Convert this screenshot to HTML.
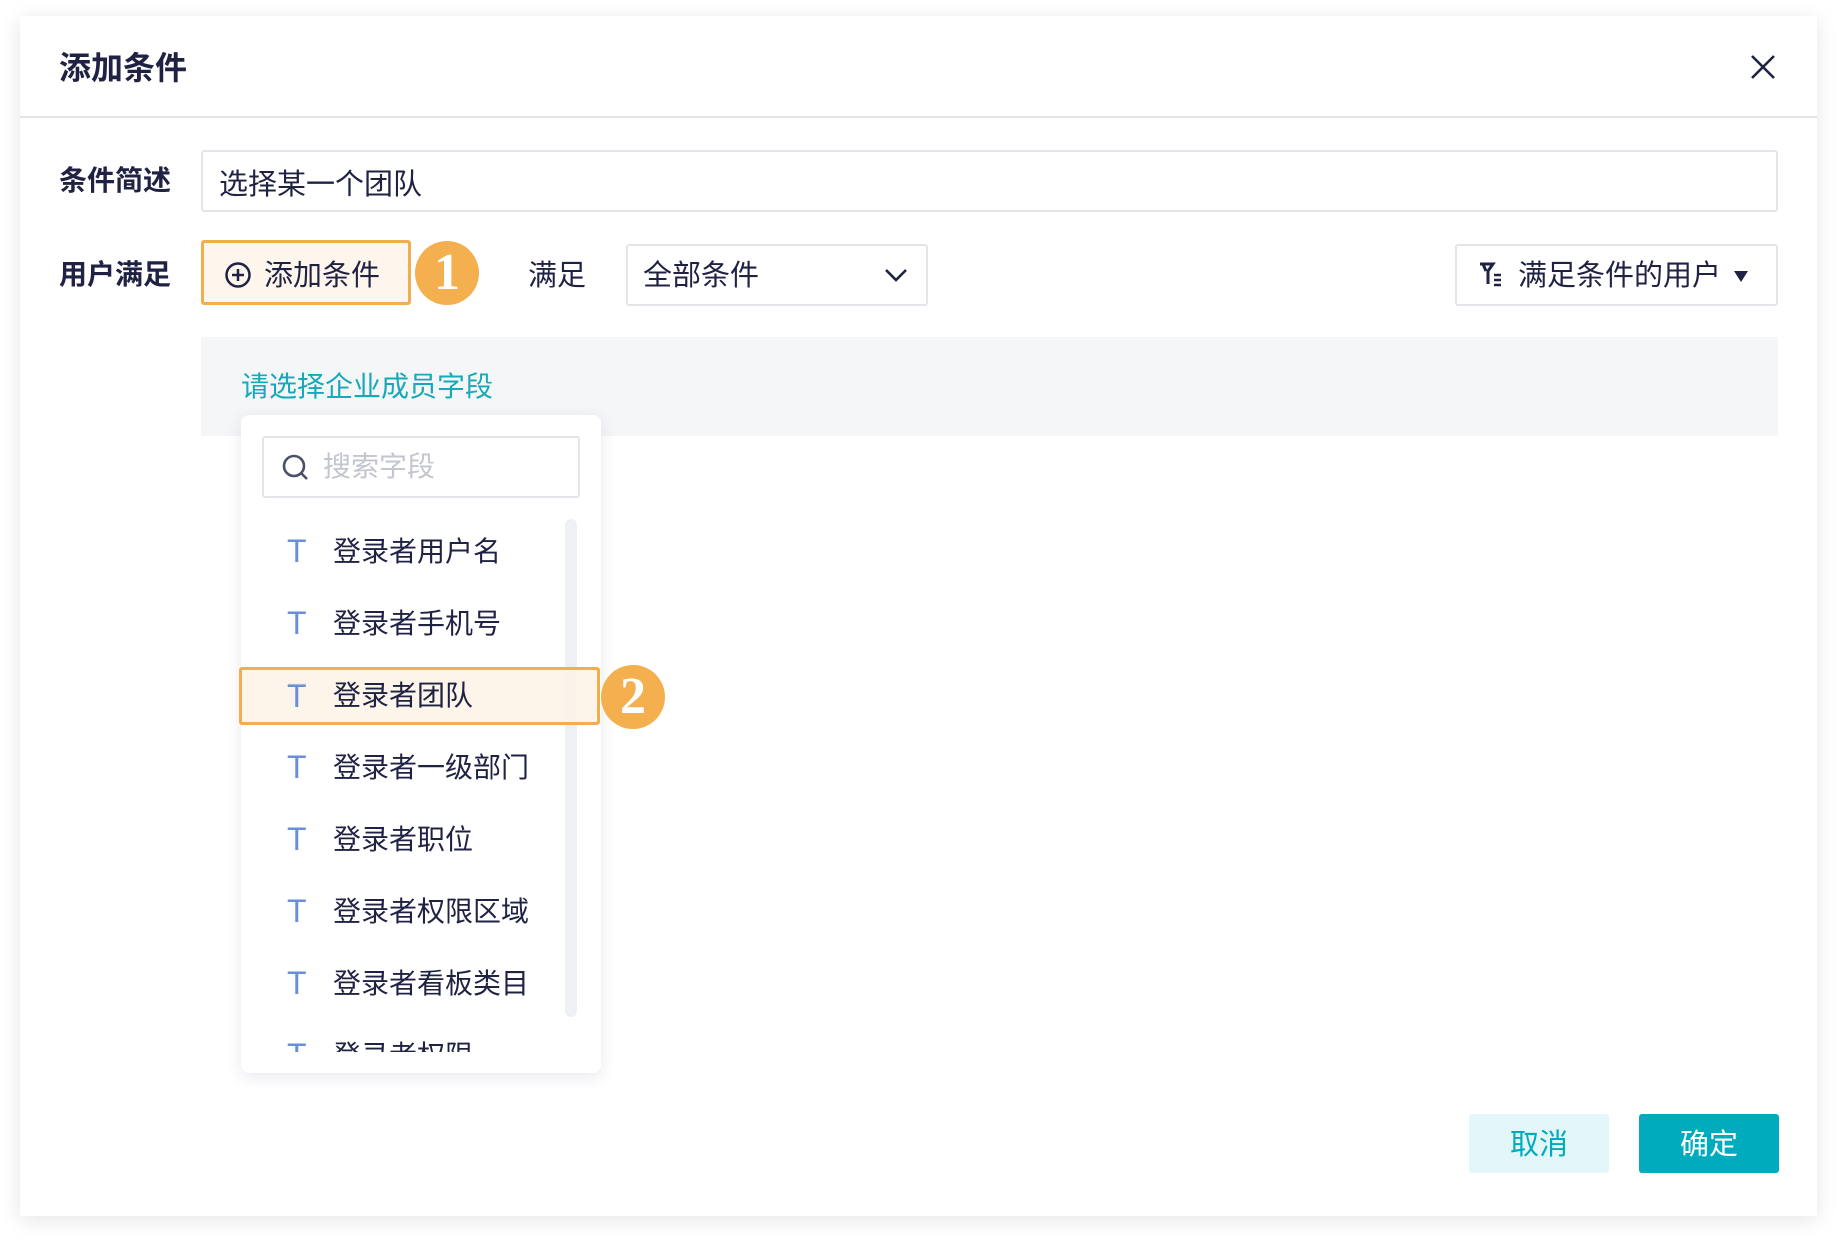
<!DOCTYPE html>
<html><head><meta charset="utf-8"><style>
*{box-sizing:border-box;margin:0;padding:0}
body{width:1837px;height:1240px;background:#fff;position:relative;overflow:hidden;font-family:"Liberation Sans","Noto Sans CJK SC",sans-serif;color:#1f2243}
.abs{position:absolute}
.dlg{left:20px;top:16px;width:1797px;height:1200px;background:#fff;box-shadow:0 4px 20px rgba(0,0,0,.10)}
.t{white-space:nowrap;line-height:1}
.item{position:absolute;left:0;width:360px;height:58px}
.item .T{position:absolute;left:46px;top:13px;font-size:32px;color:#6a8fd6;line-height:1}
.item .x{position:absolute;left:92px;top:16px;font-size:28px;line-height:1;white-space:nowrap}
</style></head><body>
<div class="abs dlg"></div>
<div class="abs t" style="left:59px;top:52px;font-size:32px;font-weight:bold">添加条件</div>
<svg class="abs" style="left:1749px;top:53px" width="28" height="28" viewBox="0 0 28 28"><path d="M3 3L25 25M25 3L3 25" stroke="#1f2243" stroke-width="2.6"/></svg>
<div class="abs" style="left:20px;top:116px;width:1797px;height:2px;background:#e4e5ea"></div>

<div class="abs t" style="left:59px;top:167px;font-size:28px;font-weight:bold">条件简述</div>
<div class="abs" style="left:201px;top:150px;width:1577px;height:62px;border:2px solid #e4e5ea;border-radius:3px"></div>
<div class="abs t" style="left:219px;top:171px;font-size:29px">选择某一个团队</div>

<div class="abs t" style="left:59px;top:261px;font-size:28px;font-weight:bold">用户满足</div>
<div class="abs" style="left:201px;top:240px;width:210px;height:65px;border:3px solid #f2ae4e;border-radius:3px;background:#fef6ec"></div>
<svg class="abs" style="left:224px;top:261px" width="28" height="28" viewBox="0 0 28 28"><circle cx="14" cy="14" r="11.5" fill="none" stroke="#1f2243" stroke-width="2.5"/><path d="M14 8v12M8 14h12" stroke="#1f2243" stroke-width="2.5"/></svg>
<div class="abs t" style="left:264px;top:262px;font-size:29px">添加条件</div>
<div class="abs" style="left:415px;top:241px;width:64px;height:64px;border-radius:50%;background:#f4b04f"></div>
<div class="abs t" style="left:415px;top:247px;width:64px;text-align:center;font-size:52px;font-weight:bold;color:#fff;font-family:'Liberation Serif',serif">1</div>

<div class="abs t" style="left:528px;top:262px;font-size:29px">满足</div>
<div class="abs" style="left:626px;top:244px;width:302px;height:62px;border:2px solid #e4e5ea;border-radius:3px"></div>
<div class="abs t" style="left:643px;top:262px;font-size:29px">全部条件</div>
<svg class="abs" style="left:884px;top:267px" width="24" height="16" viewBox="0 0 24 16"><path d="M2 3l10 10L22 3" fill="none" stroke="#1f2243" stroke-width="2.6"/></svg>

<div class="abs" style="left:1455px;top:244px;width:323px;height:62px;border:2px solid #e4e5ea;border-radius:3px"></div>
<svg class="abs" style="left:1478px;top:261px" width="28" height="28" viewBox="0 0 28 28"><path d="M2 3h13l-5 7v13" fill="none" stroke="#1f2243" stroke-width="3"/><path d="M5 3l3 7" stroke="#1f2243" stroke-width="3"/><path d="M16 14h7M16 19h7M16 24h7" stroke="#1f2243" stroke-width="2.4"/></svg>
<div class="abs t" style="left:1518px;top:262px;font-size:29px">满足条件的用户</div>
<svg class="abs" style="left:1733px;top:269px" width="16" height="14" viewBox="0 0 16 14"><path d="M1 2h14L8 13z" fill="#1f2243"/></svg>

<div class="abs" style="left:201px;top:337px;width:1577px;height:99px;background:#f5f6f8"></div>
<div class="abs t" style="left:241px;top:373px;font-size:28px;color:#16a9ba">请选择企业成员字段</div>

<div class="abs" style="left:241px;top:415px;width:360px;height:658px;background:#fff;border-radius:8px;box-shadow:0 4px 16px rgba(30,40,80,.10)"></div>
<div class="abs" style="left:262px;top:436px;width:318px;height:62px;border:2px solid #e4e5ea;border-radius:3px"></div>
<svg class="abs" style="left:281px;top:453px" width="30" height="30" viewBox="0 0 30 30"><circle cx="13" cy="13" r="10" fill="none" stroke="#4a5068" stroke-width="2.6"/><path d="M20 20l6 6" stroke="#4a5068" stroke-width="2.6"/></svg>
<div class="abs t" style="left:323px;top:453px;font-size:28px;color:#c3c5cf">搜索字段</div>
<div class="abs" style="left:565px;top:519px;width:12px;height:498px;background:#eef0f3;border-radius:6px"></div>

<div class="abs" style="left:241px;top:522px;width:360px;height:530px;overflow:hidden">
 <div class="item" style="top:0"><span class="T">T</span><span class="x">登录者用户名</span></div>
 <div class="item" style="top:72px"><span class="T">T</span><span class="x">登录者手机号</span></div>
 <div class="item" style="top:144px"><span class="T">T</span><span class="x">登录者团队</span></div>
 <div class="item" style="top:216px"><span class="T">T</span><span class="x">登录者一级部门</span></div>
 <div class="item" style="top:288px"><span class="T">T</span><span class="x">登录者职位</span></div>
 <div class="item" style="top:360px"><span class="T">T</span><span class="x">登录者权限区域</span></div>
 <div class="item" style="top:432px"><span class="T">T</span><span class="x">登录者看板类目</span></div>
 <div class="item" style="top:504px"><span class="T">T</span><span class="x">登录者权限</span></div>
</div>
<div class="abs" style="left:239px;top:667px;width:361px;height:58px;border:3px solid #f2ae4e;border-radius:3px;background:rgba(253,243,230,.85)"></div>
<div class="abs t" style="left:287px;top:680px;font-size:32px;color:#6a8fd6">T</div>
<div class="abs t" style="left:333px;top:682px;font-size:28px">登录者团队</div>
<div class="abs" style="left:601px;top:665px;width:64px;height:64px;border-radius:50%;background:#f4b04f"></div>
<div class="abs t" style="left:601px;top:671px;width:64px;text-align:center;font-size:52px;font-weight:bold;color:#fff;font-family:'Liberation Serif',serif">2</div>

<div class="abs" style="left:1469px;top:1114px;width:140px;height:59px;background:#e3f6f9;border-radius:3px"></div>
<div class="abs t" style="left:1469px;top:1131px;width:140px;text-align:center;font-size:29px;color:#00abbd">取消</div>
<div class="abs" style="left:1639px;top:1114px;width:140px;height:59px;background:#00abbd;border-radius:3px"></div>
<div class="abs t" style="left:1639px;top:1131px;width:140px;text-align:center;font-size:29px;color:#fff">确定</div>
</body></html>
